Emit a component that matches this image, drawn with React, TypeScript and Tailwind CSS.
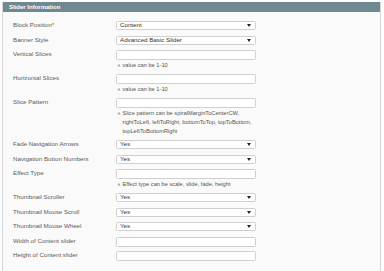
type Row = {
  label: string;
  required?: boolean;
  kind: "select" | "input";
  value?: string;
  note?: string[];
};

const rows: Row[] = [
  { label: "Block Position", required: true, kind: "select", value: "Content" },
  { label: "Banner Style", kind: "select", value: "Advanced Basic Slider" },
  { label: "Vertical Slices", kind: "input", note: ["value can be 1-10"] },
  { label: "Horizontal Slices", kind: "input", note: ["value can be 1-10"] },
  {
    label: "Slice Pattern",
    kind: "input",
    note: [
      "Slice pattern can be spiralMarginToCenterCW,",
      "rightToLeft, leftToRight, bottomToTop, topToBottom,",
      "topLeftToBottomRight",
    ],
  },
  { label: "Fade Navigation Arrows", kind: "select", value: "Yes" },
  { label: "Navigation Button Numbers", kind: "select", value: "Yes" },
  { label: "Effect Type", kind: "input", note: ["Effect type can be scale, slide, fade, height"] },
  { label: "Thumbnail Scroller", kind: "select", value: "Yes" },
  { label: "Thumbnail Mouse Scroll", kind: "select", value: "Yes" },
  { label: "Thumbnail Mouse Wheel", kind: "select", value: "Yes" },
  { label: "Width of Content slider", kind: "input" },
  { label: "Height of Content slider", kind: "input" },
];

function NoteIcon() {
  return (
    <svg width="4" height="4" viewBox="0 0 4 4" className="shrink-0 mt-[2.5px]">
      <path d="M0.5 3.5 L2 0.8 L3.5 3.5 Z" fill="#9aa5a8" />
    </svg>
  );
}

function FieldRow({ row }: { row: Row }) {
  const isSelect = row.kind === "select";
  return (
    <div className={`flex items-start ${isSelect ? "mb-[5.5px]" : "mb-[4.5px]"}`}>
      <div className="w-[103px] shrink-0 text-[6.2px] leading-[8px] text-[#5a5a5a] whitespace-nowrap">
        {row.label}
        {row.required && <span className="text-[#eb340a]">*</span>}
      </div>
      <div className="w-[140px]">
        {isSelect ? (
          <div className="h-[9px] flex items-center justify-between rounded-[1.5px] border border-[#cfcfcf] bg-white pl-[3px] pr-[4px] text-[6.2px] leading-none text-[#2f2f2f]">
            <span>{row.value}</span>
            <svg width="4" height="3" viewBox="0 0 4 3">
              <path d="M0 0 L4 0 L2 3 Z" fill="#222" />
            </svg>
          </div>
        ) : (
          <div className="h-[10px] rounded-[1.5px] border border-[#cfcfcf] bg-white" />
        )}
        {row.note && (
          <div className="flex gap-[1.5px] pt-[0.5px] pl-[1px]">
            <NoteIcon />
            <div className="text-[5.7px] leading-[9px] text-[#555] whitespace-nowrap">
              {row.note.map((line) => (
                <div key={line}>{line}</div>
              ))}
            </div>
          </div>
        )}
      </div>
    </div>
  );
}

export default function App() {
  return (
    <div className="w-[384px] h-[271px] bg-white p-[2px] font-['Liberation_Sans',Arial,sans-serif]">
      <div className="w-[379px] border border-[#d6d6d6] border-t-0">
        {/* Header */}
        <div className="h-[10px] bg-[#6f8992] pl-[6px] flex items-center text-[6px] font-bold text-white leading-none">
          Slider Information
        </div>

        {/* Fields */}
        <div className="bg-[#fafafa] pt-[9px] pl-[10px] pb-[5px]">
          {rows.map((row) => (
            <FieldRow key={row.label} row={row} />
          ))}
        </div>
      </div>
    </div>
  );
}
